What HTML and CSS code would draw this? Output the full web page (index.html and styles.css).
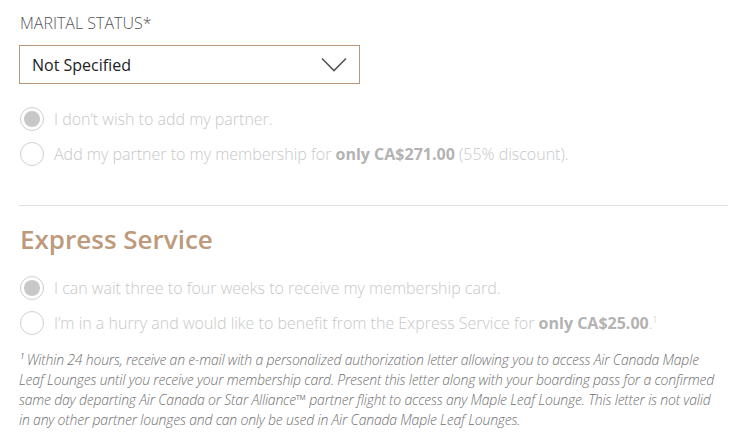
FILE: index.html
```html
<!DOCTYPE html>
<html lang="en">
<head>
<meta charset="utf-8">
<link rel="stylesheet" href="styles.css">
</head>
<body>
<div class="page">
  <div class="field">
    <div class="field-label">MARITAL STATUS*</div>
    <div class="select">
      <span class="select-value">Not Specified</span>
      <svg class="chevron" width="26" height="16" viewBox="0 0 26 16"><path d="M1 1.5 L13 13.5 L25 1.5" fill="none" stroke="#555" stroke-width="1.6"/></svg>
    </div>
  </div>
  <div class="radios">
    <label class="radio"><span class="dot checked"></span><span class="radio-text">I don’t wish to add my partner.</span></label>
    <label class="radio"><span class="dot"></span><span class="radio-text">Add my partner to my membership for <b>only CA$271.00</b> (55% discount).</span></label>
  </div>
  <hr class="divider">
  <h2 class="section-title">Express Service</h2>
  <div class="radios">
    <label class="radio"><span class="dot checked"></span><span class="radio-text">I can wait three to four weeks to receive my membership card.</span></label>
    <label class="radio"><span class="dot"></span><span class="radio-text">I’m in a hurry and would like to benefit from the Express Service for <b>only CA$25.00</b>.<sup>1</sup></span></label>
  </div>
  <p class="footnote">¹ Within 24 hours, receive an e-mail with a personalized authorization letter allowing you to access Air Canada Maple Leaf Lounges until you receive your membership card. Present this letter along with your boarding pass for a confirmed same day departing Air Canada or Star Alliance™ partner flight to access any Maple Leaf Lounge. This letter is not valid in any other partner lounges and can only be used in Air Canada Maple Leaf Lounges.</p>
</div>
</body>
</html>
```
FILE: styles.css
```css
html, body {
  margin: 0;
  padding: 0;
  background: #fff;
}
body {
  font-family: "Open Sans", "Liberation Sans", sans-serif;
}
.page {
  padding: 12px 14px 0 19px;
  width: 709px;
}
.field-label {
  font-size: 16px;
  font-weight: 300;
  color: #555;
  line-height: 22px;
  padding-left: 1px;
}
.select {
  margin-top: 11px;
  height: 37px;
  border: 1px solid #b8977a;
  display: flex;
  align-items: center;
  justify-content: space-between;
  padding: 0 12px 0 12px;
  box-sizing: content-box;
  width: 315px;
}
.select-value {
  font-size: 16px;
  color: #222;
}
.chevron {
  display: block;
  margin-top: 1px;
}
.radios {
  display: flex;
  flex-direction: column;
  gap: 11px;
  margin-top: 23px;
}
.radio {
  display: flex;
  align-items: center;
  gap: 10px;
  height: 24px;
}
.dot {
  width: 22px;
  height: 22px;
  border: 1px solid #cfcfcf;
  border-radius: 50%;
  flex: none;
  margin-left: 1px;
  position: relative;
  background: #fff;
}
.dot.checked::after {
  content: "";
  position: absolute;
  left: 3px;
  top: 3px;
  width: 16px;
  height: 16px;
  border-radius: 50%;
  background: #c8c8c6;
}
.radio-text {
  font-size: 16px;
  font-weight: 300;
  color: #c8c8c8;
}
.radio-text b {
  font-weight: 700;
  color: #b3b3b3;
}
.radio-text sup {
  font-size: 9px;
  vertical-align: 6px;
  line-height: 0;
}
.divider {
  margin: 39px 0 0 0;
  border: 0;
  border-top: 1px solid #e0e0e0;
  height: 0;
}
.section-title {
  margin: 16px 0 0 1px;
  font-size: 26px;
  font-weight: 600;
  color: #bd9a7b;
  line-height: 34px;
}
.section-title + .radios {
  margin-top: 20px;
}
.footnote {
  margin: 15px 8px 0 0;
  font-size: 14px;
  font-style: italic;
  font-weight: 300;
  letter-spacing: -0.2px;
  line-height: 20px;
  color: #707070;
}
```
